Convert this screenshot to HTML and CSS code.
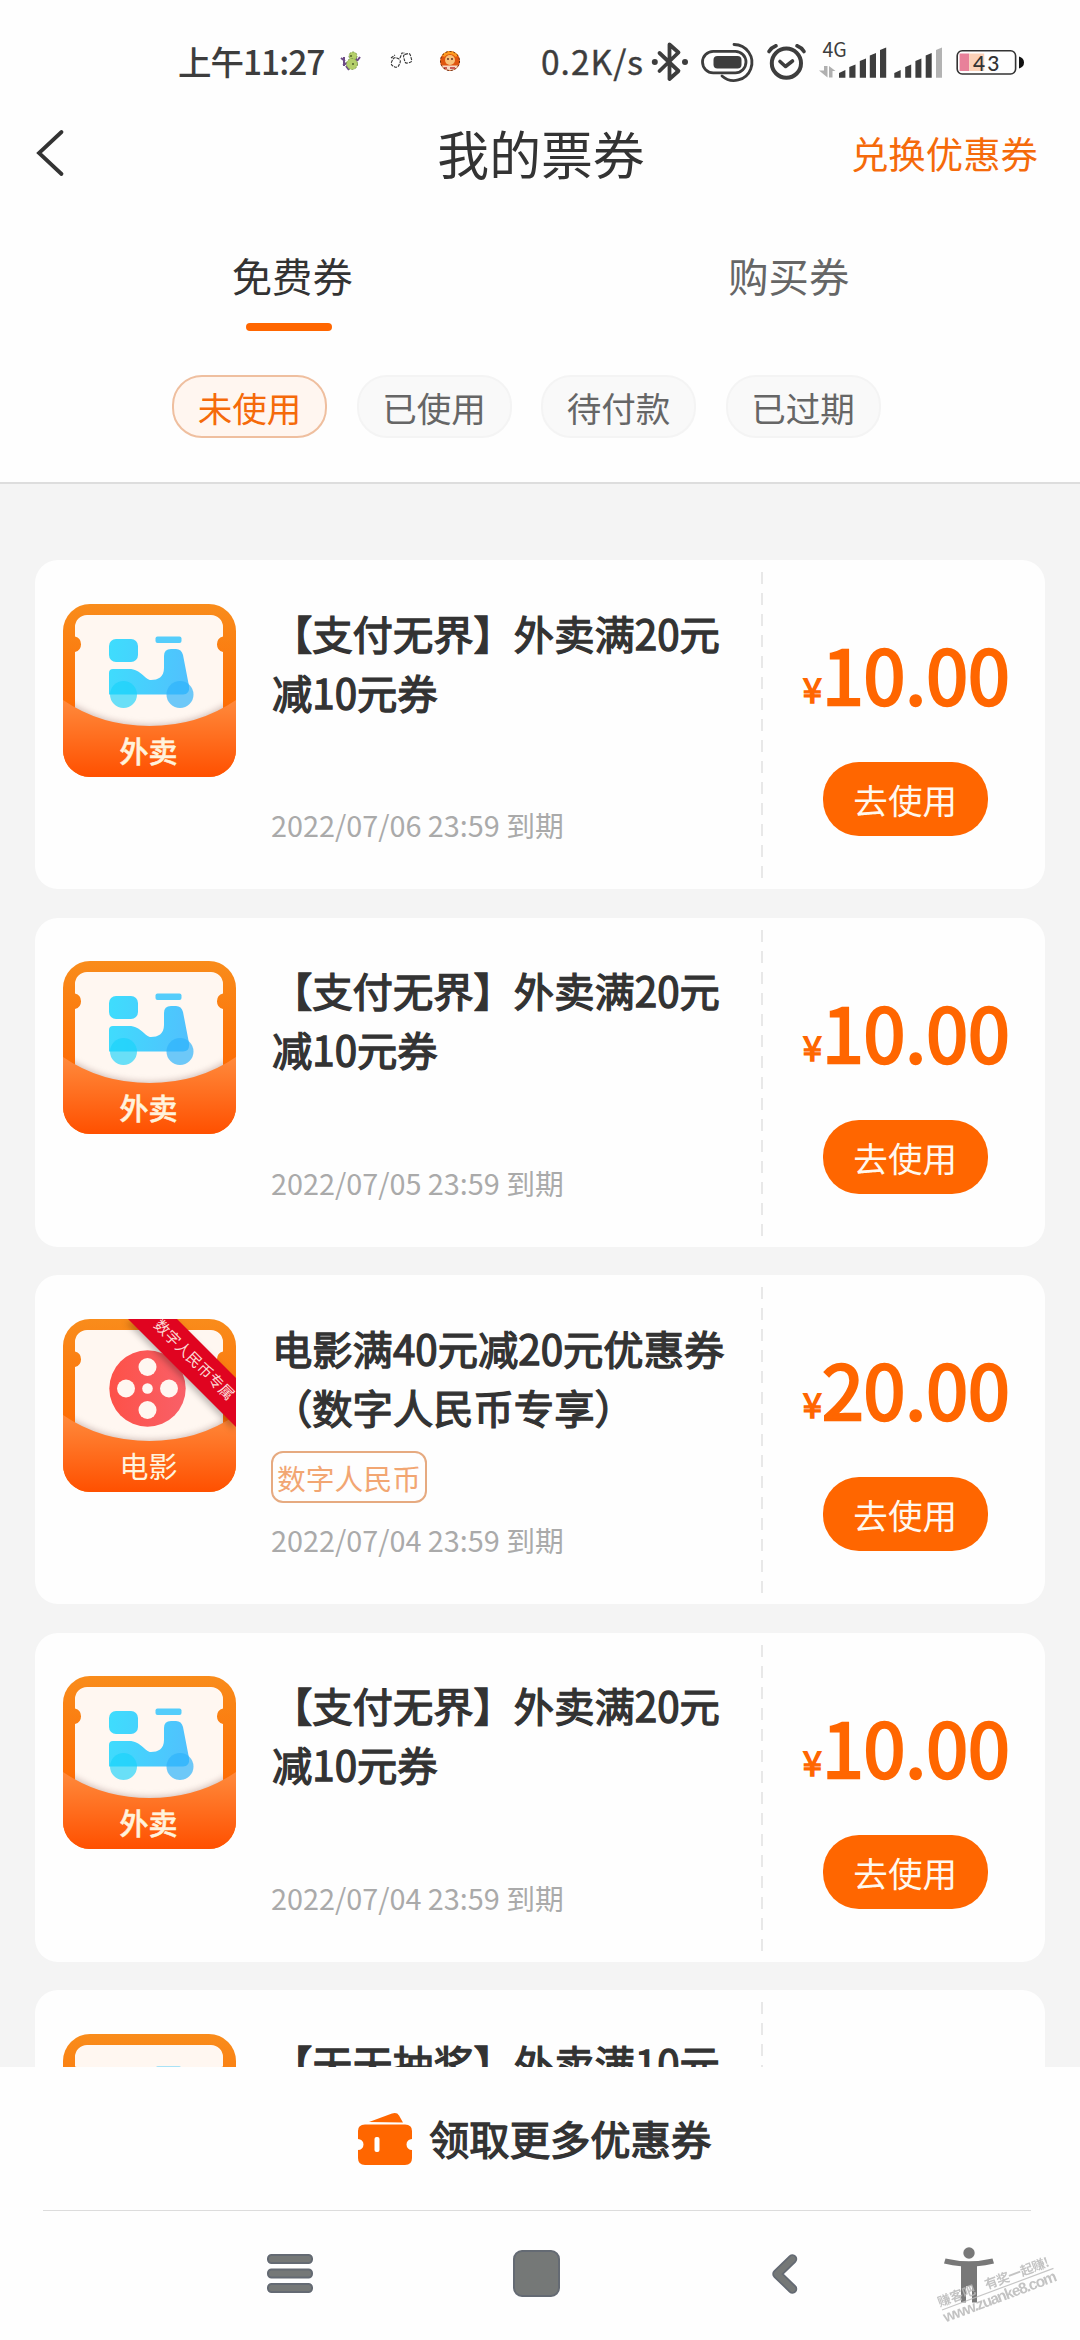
FILE: index.html
```html
<!DOCTYPE html>
<html lang="zh-CN">
<head>
<meta charset="utf-8">
<title>我的票券</title>
<link rel="stylesheet" href="styles.css">
</head>
<body>
<svg class="defs" width="0" height="0" aria-hidden="true">
  <defs>
    <linearGradient id="back" x1="0" y1="0" x2="0" y2="1"><stop offset="0" stop-color="#f98c1b"/><stop offset=".6" stop-color="#fd6d05"/></linearGradient>
    <linearGradient id="front" x1="0" y1="0" x2="0" y2="1"><stop offset="0" stop-color="#ff8a3c"/><stop offset="1" stop-color="#ff5000"/></linearGradient>
    <linearGradient id="blue" gradientUnits="userSpaceOnUse" x1="46" y1="60" x2="130" y2="70"><stop offset="0" stop-color="#3fdcfd"/><stop offset="1" stop-color="#52bffd"/></linearGradient>
    <linearGradient id="red" x1="0" y1="0" x2="1" y2="0"><stop offset="0" stop-color="#fd5148"/><stop offset="1" stop-color="#f96068"/></linearGradient>
    <clipPath id="round"><rect width="173" height="173" rx="27"/></clipPath>
    <clipPath id="paper-clip"><rect x="12" y="11" width="148" height="120" rx="12"/></clipPath>
    <filter id="soft" x="-10%" y="-30%" width="120%" height="160%"><feGaussianBlur stdDeviation="3"/></filter>
    <symbol id="ticket" viewBox="0 0 173 173">
      <rect width="173" height="173" rx="27" fill="url(#back)"/>
      <path fill="#fff7f1" d="M24 11H148a12 12 0 0 1 12 12V32.500a8 8 0 0 0 0 15.500V130H12V48a8 8 0 0 0 0-15.500V23a12 12 0 0 1 12-12Z"/>
    </symbol>
    <symbol id="pocket" viewBox="0 0 173 173">
      <g clip-path="url(#round)">
        <path clip-path="url(#paper-clip)" filter="url(#soft)" fill="#a98f8a" opacity=".55" d="M0 94Q38 121 86.500 121T173 94V140H0Z"/>
        <path fill="url(#front)" d="M0 96Q38 122 86.500 122T173 96V173H0Z"/>
      </g>
    </symbol>
    <symbol id="scooter" viewBox="0 0 173 173">
      <rect x="46" y="35" width="29" height="23" rx="7" fill="url(#blue)"/>
      <rect class="bar" x="92.500" y="32.500" width="26" height="6.500" rx="2"/>
      <path fill="url(#blue)" d="M50 65H66C78 65 82 76 88 76C95 76 101 73 101 64V52Q101 45 108 45H113Q118.500 45 120 51L126 82Q127 90.500 120 90.500H46V69Q46 65 50 65Z"/>
      <circle cx="60.500" cy="90.500" r="13.500" fill="#19d2fb" opacity=".65"/>
      <circle cx="117" cy="90.500" r="13.500" fill="#2fb4fb" opacity=".7"/>
    </symbol>
    <symbol id="reel" viewBox="0 0 173 173">
      <circle cx="84.500" cy="69.500" r="38.200" fill="url(#red)"/>
      <g fill="#fff7f1"><circle cx="84.500" cy="69.500" r="5.300"/><circle cx="84.500" cy="48" r="9"/><circle cx="84.500" cy="91" r="9"/><circle cx="63" cy="69.500" r="9"/><circle cx="106" cy="69.500" r="9"/></g>
    </symbol>
  </defs>
</svg>

<div class="screen">
  <header class="top">
    <div class="status">
      <span class="time">上午11:27</span>
      <svg class="notices" width="122" height="24" viewBox="0 0 122 24">
        <path d="M2 9l4 3M4 16l4-2M5 8v9M7 17l3 4M21 8l-3 4M17 9v4" stroke="#6c4a86" stroke-width="2" fill="none"/>
        <g fill="#b4cf6a" stroke="#7f9a52" stroke-width="1" stroke-dasharray="2 1.500"><circle cx="14" cy="7" r="4"/><circle cx="13" cy="15" r="5.500"/></g>
        <circle cx="12" cy="7" r="1" fill="#50602c"/><circle cx="14" cy="15" r="1" fill="#50602c"/>
        <g fill="#fff" stroke="#333" stroke-width="1.100" stroke-dasharray="3 1"><rect x="53" y="9" width="8" height="9" rx="3" transform="rotate(25 57 13)"/><rect x="65" y="5" width="7" height="9" rx="2" transform="rotate(-15 68 9)"/><path d="M52 9l4-3M61 9l2-5h3" fill="none"/></g>
        <circle cx="111" cy="12" r="10" fill="#e0560e"/><path d="M102.500 16.500h17a10 10 0 0 1-17 0Z" fill="#f7d9c4"/><circle cx="111" cy="11" r="5" fill="#f8c078"/><path d="M104 7q7-7 14 0" stroke="#ff9b20" stroke-width="3" fill="none"/><circle cx="109" cy="10" r=".9" fill="#522"/><circle cx="113" cy="10" r=".9" fill="#522"/><path d="M105 19h3m3 0h5" stroke="#b33" stroke-width="1.500"/><circle cx="111" cy="12" r="9.500" fill="none" stroke="#5a2710" stroke-dasharray="2 2"/>
      </svg>
      <span class="speed">0.2K/s</span>
      <svg class="sys" width="380" height="44" viewBox="650 40 380 44">
        <g fill="none" stroke="#3d3d3d" stroke-width="3.800" stroke-linejoin="round" stroke-linecap="round">
          <path d="M659.500 53L678.500 71L669.500 79V44.500L678.500 52.500L659.500 71"/>
          <rect x="702.500" y="51.300" width="43.500" height="21.500" rx="10.700" stroke-width="2.800"/>
          <path d="M734 44.500A18 18 0 1 1 722 76" stroke-width="2.800"/>
          <circle cx="786.400" cy="63.200" r="14.600" stroke-width="4"/>
          <path d="M780 61.500L785.500 66.500L792.500 61M769 51.500Q771.500 47.500 776 45.800M804 51.500Q801.500 47.500 797 45.800" stroke-width="3.600"/>
        </g>
        <g fill="#3d3d3d">
          <circle cx="654.800" cy="62" r="3"/><circle cx="685" cy="62" r="3"/>
          <rect x="713.500" y="56" width="28" height="12.600" rx="4"/>
          <path d="M839 77.700V73l6.400-3v7.700Z"/><path d="M849.300 77.700V67l6.200-2.500v13.200Z"/><path d="M859.800 77.700V61l6.200-2.500v19.200Z"/><path d="M869.800 77.700V55.500l6.200-2.500v24.700Z"/><path d="M880 77.700V50l6.200-2.500v30.200Z"/>
          <path d="M894.300 77.700V73l6.400-3v7.700Z"/><path d="M905.200 77.700V67l6-2.500v13.200Z"/><path d="M915.400 77.700V61l6-2.500v19.200Z"/><path d="M925.700 77.700V55.500l6-2.500v24.700Z"/>
        </g>
        <path fill="#b3b3b3" d="M936 77.700V50l6-2.500v30.200Z"/>
        <path fill="#b0b0b0" d="M824 66h3.500v11.500L819 70.500h5ZM829 77.500h3.500v-6.500h3L829 66Z"/>
        <text x="822.500" y="57.300" class="net">4G</text>
        <rect x="959.600" y="53.500" width="9.600" height="17.500" fill="#e8819a"/>
        <rect x="969.200" y="53.500" width="15" height="17.500" fill="#fbd1b8"/>
        <rect x="957.200" y="50.800" width="58.400" height="23.200" rx="5" fill="none" stroke="#333" stroke-width="1.600"/>
        <path fill="#111" d="M1019 56.500q5 1.500 5 6t-5 6Z"/>
        <text x="973" y="70.500" class="level">43</text>
      </svg>
    </div>
    <nav class="titlebar">
      <svg class="back" width="32" height="52" viewBox="0 0 32 52"><path d="M27.500 5L5 26L27.500 47" fill="none" stroke="#333" stroke-width="3.800" stroke-linecap="round"/></svg>
      <h1 class="title">我的票券</h1>
      <a class="redeem">兑换优惠券</a>
    </nav>
    <div class="tabs">
      <div class="tab tab-on">免费券</div>
      <div class="tab">购买券</div>
    </div>
    <div class="chips">
      <span class="chip chip-on">未使用</span>
      <span class="chip">已使用</span>
      <span class="chip">待付款</span>
      <span class="chip">已过期</span>
    </div>
  </header>

  <main class="list">
    <article class="card">
      <svg class="thumb" viewBox="0 0 173 173"><use href="#ticket"/><use href="#pocket"/><use href="#scooter"/><text class="label label-bold" x="85.500" y="159">外卖</text></svg>
      <div class="info"><h2 class="name">【支付无界】外卖满20元减10元券</h2><p class="date">2022/07/06 23:59 到期</p></div>
      <div class="side"><p class="price"><span class="yen">¥</span>10.00</p><button class="use">去使用</button></div>
    </article>
    <article class="card">
      <svg class="thumb" viewBox="0 0 173 173"><use href="#ticket"/><use href="#pocket"/><use href="#scooter"/><text class="label label-bold" x="85.500" y="159">外卖</text></svg>
      <div class="info"><h2 class="name">【支付无界】外卖满20元减10元券</h2><p class="date">2022/07/05 23:59 到期</p></div>
      <div class="side"><p class="price"><span class="yen">¥</span>10.00</p><button class="use">去使用</button></div>
    </article>
    <article class="card">
      <svg class="thumb" viewBox="0 0 173 173"><use href="#ticket"/><use href="#reel"/><use href="#pocket"/>
        <g clip-path="url(#round)"><path class="ribbon" d="M65 0H114L173 59V108Z"/></g>
        <text class="ribbon-text" transform="translate(131 41) rotate(45)" x="0" y="5">数字人民币专属</text>
        <text class="label" x="85.500" y="159">电影</text></svg>
      <div class="info"><h2 class="name">电影满40元减20元优惠券（数字人民币专享）</h2><span class="tag">数字人民币</span><p class="date">2022/07/04 23:59 到期</p></div>
      <div class="side"><p class="price"><span class="yen">¥</span>20.00</p><button class="use">去使用</button></div>
    </article>
    <article class="card">
      <svg class="thumb" viewBox="0 0 173 173"><use href="#ticket"/><use href="#pocket"/><use href="#scooter"/><text class="label label-bold" x="85.500" y="159">外卖</text></svg>
      <div class="info"><h2 class="name">【支付无界】外卖满20元减10元券</h2><p class="date">2022/07/04 23:59 到期</p></div>
      <div class="side"><p class="price"><span class="yen">¥</span>10.00</p><button class="use">去使用</button></div>
    </article>
    <article class="card">
      <svg class="thumb thumb-teal" viewBox="0 0 173 173"><use href="#ticket"/><use href="#pocket"/><use href="#scooter"/></svg>
      <div class="info"><h2 class="name">【天天抽奖】外卖满10元</h2></div>
      <div class="side"></div>
    </article>
  </main>

  <footer class="bottom">
    <div class="more">
      <svg width="56" height="54" viewBox="0 0 56 54"><path fill="#ff6600" d="M12 10L35 1.500Q40 0 42 3.500L46 10.500Z"/><path fill="#ff6600" d="M8 12.500H48Q55 12.500 55 19V27a5.500 5.500 0 0 0 0 11V46Q55 53 48 53H8Q1 53 1 46V38a5.500 5.500 0 0 0 0-11V19Q1 12.500 8 12.500Z"/><rect x="17.500" y="25" width="5" height="15" rx="2" fill="#fff"/></svg>
      <span class="more-text">领取更多优惠券</span>
    </div>
    <div class="sysnav">
      <svg width="816" height="129" viewBox="264 2211 816 129">
        <g fill="#757877" stroke="#646a73" stroke-width="2">
          <rect x="268" y="2255" width="44" height="8" rx="3.500"/><rect x="268" y="2269.500" width="44" height="8" rx="3.500"/><rect x="268" y="2284" width="44" height="8" rx="3.500"/>
          <rect x="514" y="2251" width="45" height="45" rx="8"/>
        </g>
        <path d="M792.500 2259L777 2274L792.500 2289" fill="none" stroke="#646a73" stroke-width="9.500" stroke-linecap="round" stroke-linejoin="round"/>
        <path d="M792.500 2259L777 2274L792.500 2289" fill="none" stroke="#757877" stroke-width="6" stroke-linecap="round" stroke-linejoin="round"/>
        <g fill="#787878"><circle cx="969" cy="2253" r="5.700"/><path d="M945.500 2258.500Q969 2264 992.500 2258.500L994 2263.500Q985.500 2265.800 977 2266.200V2302.500H972V2286H966V2302.500H961V2266.200Q952.500 2265.800 944 2263.500Z"/></g>
        <g class="mark" transform="translate(942 2310) rotate(-20.500)">
          <path d="M0 0H119" stroke="#bdbdbd" stroke-width="1.200"/>
          <text class="mark-cn" x="-1" y="-3.500" textLength="39">赚客吧</text>
          <text class="mark-cn" x="49" y="-3.500" textLength="68">有奖一起赚!</text>
          <text class="mark-url" x="-1" y="13" textLength="120">www.zuanke8.com</text>
        </g>
      </svg>
    </div>
  </footer>
</div>
</body>
</html>
```

FILE: styles.css
```css
* { box-sizing: border-box; margin: 0; padding: 0; }

body {
  width: 1080px;
  height: 2340px;
  overflow: hidden;
  background: #f4f4f4;
  color: #333;
  font-family: "Noto Sans CJK SC", "Noto Sans", sans-serif;
}

.defs { position: absolute; }

.screen { display: flex; flex-direction: column; height: 2340px; }

/* header */
.top {
  flex: none;
  height: 484px;
  background: #fefefe;
  border-bottom: 2px solid #ddd;
}

.status {
  display: flex;
  align-items: center;
  height: 122px;
  padding-left: 178px;
  color: #3d3d3d;
}
.time { width: 161px; font-size: 33.500px; font-weight: 500; letter-spacing: -1px; line-height: 48px; white-space: nowrap; }
.notices { width: 122px; margin-right: 80px; flex: none; }
.speed { width: 109px; font-size: 33.500px; font-weight: 400; letter-spacing: 1px; line-height: 48px; white-space: nowrap; -webkit-text-stroke: .4px #3d3d3d; }
.sys { flex: none; margin-top: 2px; overflow: visible; }
.net { font-size: 19.500px; fill: #3d3d3d; }
.level { font: 500 21px Lato, sans-serif; letter-spacing: 2px; fill: #333; }

.titlebar {
  display: grid;
  grid-template-columns: 1fr auto 1fr;
  align-items: center;
  height: 62px;
  padding: 0 42px 0 34px;
}
.title { font-size: 51.840px; font-weight: 400; line-height: 62px; color: #333; padding-left: 10px; }
.redeem { justify-self: end; font-size: 37.440px; line-height: 62px; color: #f56a0a; }

.tabs { display: flex; padding: 60px 43px 0 44px; }
.tab {
  flex: 1;
  height: 88px;
  text-align: center;
  font-size: 40.320px;
  line-height: 61px;
  color: #666;
}
.tab-on { color: #333; }
.tab-on::after {
  content: "";
  display: block;
  width: 86px;
  height: 8px;
  margin: 18px auto 0 202px;
  border-radius: 4px;
  background: #ff6600;
}

.chips { display: flex; gap: 29.500px; padding: 43px 0 0 172px; }
.chip {
  width: 155px;
  height: 63px;
  border: 2px solid #f4f4f4;
  border-radius: 30px;
  background: #f9f9f9;
  color: #666;
  font-size: 34.560px;
  line-height: 60px;
  text-align: center;
}
.chip-on { border-color: #efbf9f; background: #fff6f0; color: #f56a0a; }

/* coupon list */
.list {
  flex: none;
  display: flex;
  flex-direction: column;
  gap: 28.500px;
  height: 1583px;
  padding: 76px 34.600px 0;
  overflow: hidden;
}
.card {
  flex: none;
  display: flex;
  height: 329px;
  border-radius: 23px;
  background: #fefefe;
  padding: 0 0 0 28.400px;
}
.thumb { flex: none; width: 173px; height: 173px; margin-top: 43.500px; }
.bar { fill: #55cdfb; }
.thumb-teal .bar, .thumb-teal { fill: #8fd6d0; }
.label { font-size: 29px; fill: #fff3dd; text-anchor: middle; }
.label-bold { font-weight: 500; stroke: #fff3dd; stroke-width: .5px; }
.ribbon { fill: #e00420; filter: drop-shadow(-2px 3px 3px rgba(0, 0, 0, .25)); }
.ribbon-text { font-size: 15.200px; fill: #fbd9d5; text-anchor: middle; }

.info {
  flex: none;
  display: flex;
  flex-direction: column;
  align-items: flex-start;
  width: 525px;
  padding: 42.500px 0 44px 35px;
}
.name {
  width: 472px;
  margin-left: 1px;
  font-size: 40.320px;
  font-weight: 400;
  line-height: 59px;
  -webkit-text-stroke: 1.300px #333;
}
.tag {
  height: 52px;
  margin-top: 15px;
  padding: 0 4px;
  border: 2px solid #e6aa80;
  border-radius: 12px;
  color: #f2a672;
  font-size: 28.800px;
  line-height: 49px;
}
.date { margin-top: auto; font-size: 28.800px; line-height: 40px; color: #aaa; }

.side {
  flex: 1;
  display: flex;
  flex-direction: column;
  align-items: center;
  height: 306px;
  margin-top: 12px;
  padding-left: 4px;
  background: repeating-linear-gradient(#e8e8e8 0 12px, transparent 12px 21px) left top / 2px 100% no-repeat;
}
.price {
  display: flex;
  align-items: baseline;
  height: 100px;
  margin-top: 51px;
  padding-left: 2px;
  font-size: 75.200px;
  line-height: 100px;
  color: #ff6600;
  -webkit-text-stroke: 2.600px #ff6600;
}
.yen { font-size: 34.560px; -webkit-text-stroke: 1.400px #ff6600; position: relative; top: -2px; }
.use {
  width: 165px;
  height: 74px;
  margin-top: 39px;
  border: 0;
  border-radius: 36px;
  background: #ff6600;
  color: #fff8ee;
  font: 400 34.560px/74px "Noto Sans CJK SC", sans-serif;
}

/* bottom area */
.bottom { flex: none; height: 273px; background: #fefefe; }
.more {
  display: flex;
  align-items: center;
  gap: 16px;
  height: 144px;
  margin: 0 49px 0 43px;
  padding-left: 314px;
  border-bottom: 1px solid #dcdcdc;
}
.more-text { margin-top: -2px; font-size: 40.320px; line-height: 60px; -webkit-text-stroke: 1.300px #333; }
.sysnav { display: flex; justify-content: flex-end; height: 129px; }
.mark { opacity: .85; }
.mark-cn { font-size: 13px; font-weight: 700; fill: #b9b9b9; }
.mark-url { font: 700 15.500px "Liberation Sans", sans-serif; fill: #b9b9b9; }
```
